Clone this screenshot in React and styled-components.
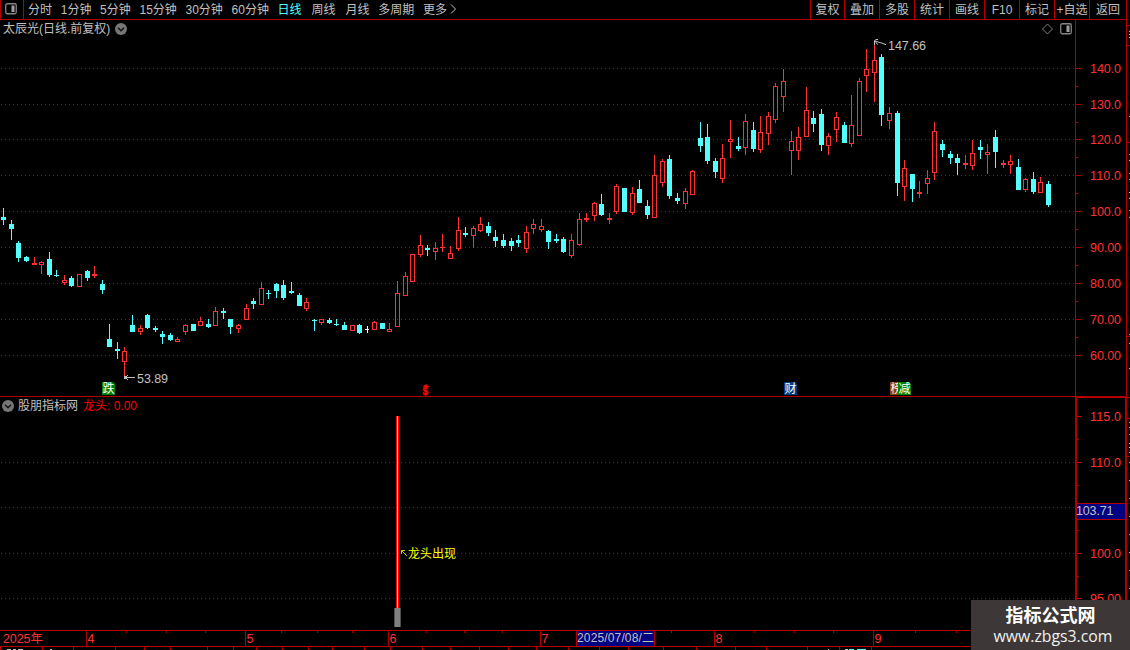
import styled, { createGlobalStyle } from "styled-components"

const RED = "#ff3232"
const CYAN = "#54ffff"
const LINE = "#b00000"
const DOT = "#a00c0c"
const GRAY = "#c0c0c0"
const FONT = `"Liberation Sans", "Noto Sans CJK SC", sans-serif`

const GlobalStyle = createGlobalStyle`
    * { box-sizing: border-box; }
    body {
        margin: 0;
        background: #000;
        overflow: hidden;
    }
    svg { display: block; }
    svg text { white-space: pre; }
`

// x, high, body top, body bottom, low, kind (u = up, d = down, e = even)
const CANDLES = [
    [3, 208, 217, 220, 225, "d"], [11, 220, 224, 229, 240, "d"], [18, 241, 243, 258, 262, "d"],
    [26, 256, 257, 261, 262, "d"], [34, 257, 263, 265, 265, "u"], [41, 261, 262, 265, 274, "u"],
    [49, 252, 259, 275, 277, "d"], [56, 270, 275, 276, 277, "d"], [64, 275, 280, 283, 285, "u"],
    [71, 276, 278, 286, 287, "d"], [79, 274, 274, 287, 287, "u"], [87, 270, 271, 278, 281, "d"],
    [94, 266, 274, 276, 278, "u"], [102, 280, 284, 290, 294, "d"], [109, 324, 339, 347, 347, "d"],
    [117, 342, 349, 351, 359, "d"], [124, 347, 351, 362, 377, "u"], [132, 315, 325, 332, 332, "d"],
    [140, 325, 328, 332, 335, "u"], [147, 314, 315, 328, 329, "d"], [155, 326, 328, 330, 332, "d"],
    [162, 331, 334, 337, 344, "d"], [170, 333, 335, 340, 341, "d"], [177, 337, 339, 342, 342, "u"],
    [185, 324, 325, 332, 335, "u"], [193, 324, 324, 331, 331, "d"], [200, 317, 321, 326, 326, "u"],
    [208, 319, 324, 327, 328, "d"], [215, 307, 311, 326, 326, "u"], [223, 308, 311, 313, 319, "d"],
    [230, 319, 319, 327, 334, "d"], [238, 324, 325, 329, 333, "u"], [246, 304, 308, 320, 320, "u"],
    [253, 298, 301, 304, 309, "d"], [261, 282, 288, 305, 305, "u"], [268, 290, 293, 294, 299, "d"],
    [276, 283, 284, 291, 298, "d"], [283, 280, 285, 298, 300, "d"], [291, 282, 291, 293, 294, "d"],
    [299, 293, 295, 306, 306, "d"], [306, 298, 302, 309, 311, "u"], [314, 319, 320, 321, 331, "d"],
    [321, 319, 319, 323, 325, "u"], [329, 318, 320, 323, 324, "d"], [336, 319, 324, 325, 326, "d"],
    [344, 322, 325, 330, 330, "d"], [352, 325, 325, 331, 331, "u"], [359, 324, 325, 333, 334, "d"],
    [367, 326, 329, 330, 333, "e"], [374, 321, 322, 330, 330, "u"], [382, 323, 323, 329, 329, "d"],
    [389, 323, 329, 332, 332, "u"], [397, 281, 293, 327, 327, "u"], [405, 272, 276, 296, 296, "u"],
    [412, 254, 254, 282, 282, "u"], [420, 235, 245, 255, 257, "u"], [427, 245, 248, 250, 256, "d"],
    [435, 242, 248, 252, 260, "u"], [442, 234, 247, 248, 252, "u"], [450, 246, 253, 259, 259, "u"],
    [458, 217, 230, 249, 251, "u"], [465, 227, 233, 235, 237, "d"], [473, 226, 228, 236, 248, "u"],
    [480, 217, 224, 231, 232, "u"], [488, 222, 226, 233, 236, "d"], [495, 230, 237, 241, 247, "d"],
    [503, 234, 240, 246, 248, "d"], [511, 238, 241, 246, 251, "d"], [518, 235, 240, 243, 247, "d"],
    [526, 226, 232, 249, 253, "u"], [533, 219, 224, 229, 234, "u"], [541, 219, 226, 230, 232, "u"],
    [548, 230, 231, 242, 249, "d"], [556, 234, 239, 241, 243, "d"], [563, 237, 239, 252, 253, "d"],
    [571, 234, 240, 256, 258, "u"], [579, 213, 219, 245, 246, "u"], [586, 213, 218, 220, 222, "u"],
    [594, 202, 203, 216, 221, "u"], [601, 194, 204, 215, 216, "d"], [609, 213, 218, 220, 224, "u"],
    [616, 184, 186, 212, 214, "u"], [624, 188, 188, 212, 212, "d"], [632, 187, 193, 213, 215, "u"],
    [639, 180, 189, 203, 203, "d"], [647, 200, 206, 215, 219, "d"], [654, 155, 175, 218, 218, "u"],
    [662, 159, 161, 183, 187, "u"], [669, 155, 159, 196, 199, "d"], [677, 193, 198, 201, 204, "d"],
    [685, 188, 191, 204, 209, "u"], [692, 170, 171, 195, 195, "u"], [700, 122, 138, 146, 152, "d"],
    [707, 124, 137, 161, 164, "d"], [715, 158, 161, 172, 178, "d"], [722, 144, 158, 179, 183, "u"],
    [730, 120, 139, 142, 158, "u"], [738, 137, 146, 149, 151, "d"], [745, 114, 121, 148, 155, "u"],
    [753, 122, 130, 149, 152, "d"], [760, 116, 132, 150, 153, "u"], [768, 112, 116, 134, 145, "u"],
    [775, 83, 86, 120, 123, "u"], [783, 69, 81, 97, 112, "u"], [791, 131, 141, 151, 175, "u"],
    [798, 127, 137, 151, 160, "u"], [806, 87, 110, 137, 137, "u"], [813, 111, 118, 124, 132, "d"],
    [821, 109, 114, 145, 151, "d"], [828, 133, 136, 146, 155, "u"], [836, 112, 117, 130, 142, "u"],
    [844, 122, 125, 143, 143, "d"], [851, 95, 125, 144, 147, "u"], [859, 78, 81, 136, 136, "u"],
    [866, 49, 69, 76, 92, "u"], [874, 43, 60, 73, 102, "u"], [881, 54, 57, 115, 126, "d"],
    [889, 107, 113, 121, 129, "u"], [897, 111, 113, 183, 196, "d"], [904, 160, 168, 187, 201, "u"],
    [912, 174, 174, 189, 202, "d"], [919, 181, 192, 194, 198, "u"], [927, 170, 178, 184, 194, "u"],
    [934, 122, 131, 173, 180, "u"], [942, 140, 144, 150, 157, "d"], [950, 151, 154, 158, 164, "d"],
    [957, 154, 158, 163, 175, "d"], [965, 155, 163, 165, 169, "u"], [972, 140, 153, 166, 170, "u"],
    [980, 140, 147, 150, 159, "d"], [987, 144, 152, 155, 174, "u"], [995, 130, 137, 152, 168, "d"],
    [1003, 160, 163, 165, 168, "u"], [1010, 155, 161, 165, 174, "u"], [1018, 159, 167, 190, 190, "d"],
    [1025, 178, 179, 190, 192, "u"], [1033, 172, 179, 192, 194, "d"], [1040, 177, 182, 193, 193, "u"],
    [1048, 181, 184, 205, 207, "d"],
]

const PRICE_TICKS = [
    [68, "140.0"], [104, "130.0"], [139, "120.0"], [175, "110.0"], [211, "100.0"],
    [247, "90.00"], [283, "80.00"], [319, "70.00"], [355, "60.00"],
]
const PRICE_HALF_TICKS = [86, 122, 157, 193, 229, 265, 301, 337]

const SIGNAL_TICKS = [[416, "115.0"], [462, "110.0"], [553, "100.0"], [598, "95.00"]]
const SIGNAL_HALF_TICKS = [439, 485, 530, 576]
const SIGNAL_GRID = [462, 507, 553, 598]

const PERIODS = ["分时", "1分钟", "5分钟", "15分钟", "30分钟", "60分钟", "日线", "周线", "月线", "多周期", "更多"]
const ACTIONS = ["复权", "叠加", "多股", "统计", "画线", "F10", "标记", "+自选", "返回"]

const MONTHS = [[86, "4"], [245, "5"], [388, "6"], [540, "7"], [714, "8"], [873, "9"]]
const WEEKS = [126, 166, 205, 281, 317, 352, 426, 464, 502, 671, 754, 794, 833, 915, 956]
const FOOT_MARKS = [
    0, 42, 73, 115, 144, 170, 207, 233, 256, 282, 308, 332, 364, 390, 422, 450, 479, 508,
    536, 568, 599, 628, 663, 696, 735, 766, 807, 839, 871,
]

const Screen = styled.div`
    position: relative;
    display: grid;
    grid-template-columns: 1126px 4px;
    width: 1130px;
    height: 650px;
    overflow: hidden;
    background: #000;
    color: ${GRAY};
    font: 12px/18px ${FONT};
`

const Main = styled.main`
    display: grid;
    grid-template-rows: 20px 377px 233px 20px;
`

const Toolbar = styled.header`
    display: flex;
    height: 20px;
    border-bottom: 1px solid ${LINE};
    line-height: 20px;
`

const ToggleCell = styled.div`
    width: 24px;
    padding: 3px 0 0 4px;
    border-left: 1px solid ${LINE};
    border-right: 1px solid ${LINE};
`

const Periods = styled.nav`
    display: flex;
    flex: 1;
    gap: 8.7px;
    padding-left: 4px;
    white-space: nowrap;
`

const Period = styled.span`
    margin-left: ${({ $spaced }) => ($spaced ? 1.3 : 0)}px;
    color: ${({ $active }) => ($active ? CYAN : GRAY)};
`

const MoreIcon = styled.svg`
    width: 8px;
    height: 18px;
    margin-left: -6px;
    fill: none;
    stroke: ${GRAY};
`

const Actions = styled.nav`
    display: grid;
    grid-template-columns: 34px repeat(7, 35px) 37px;
`

const Action = styled.span`
    border-left: 1px solid ${LINE};
    text-align: center;
    white-space: nowrap;
`

const Panel = styled.section`
    display: grid;
    grid-template-columns: 1075px 51px;
`

const PricePanel = styled(Panel)`
    border-bottom: 1px solid ${LINE};
`

const PanelHead = styled.div`
    display: flex;
    align-items: center;
    height: 18px;
    padding: 0 3px 0 2px;
    line-height: 20px;
`

const PanelName = styled.span`
    margin: 0 5px 0 ${({ $indent }) => $indent}px;
`

const PanelTools = styled.div`
    display: flex;
    gap: 7px;
    margin-left: auto;
`

const Reading = styled.span`
    color: #f00;
    line-height: 18px;
`

const Watermark = styled.div`
    position: absolute;
    right: 0;
    bottom: 0;
    display: flex;
    flex-direction: column;
    align-items: center;
    width: 159px;
    height: 50px;
    padding-top: 3px;
    background: #3d3837;
    color: #fff;
`

const WatermarkName = styled.strong`
    font: 700 18px/23px "Noto Sans CJK SC", sans-serif;
`

const WatermarkUrl = styled.span`
    padding-left: 5px;
    color: #f0f0f0;
    font: 15.8px/20px "Open Sans", sans-serif;
`

function SidebarIcon() {
    return (
        <svg width="12" height="12" fill="none">
            <rect x="0.75" y="0.75" width="10.5" height="10" rx="1.5" stroke="#858585" strokeWidth="1.3" />
            <rect x="6.5" y="2.5" width="3" height="6.5" fill="#a0a0a0" />
        </svg>
    )
}

function DropdownIcon() {
    return (
        <svg width="12" height="12" fill="none">
            <circle cx="6" cy="6" r="6" fill="#777" />
            <path d="M3 4.7l3 3 3-3" stroke="#111" strokeWidth="1.4" />
        </svg>
    )
}

function Grid({ rows }) {
    return rows.map((y) => (
        <line key={y} x1="1" x2="1075" y1={y + 0.5} y2={y + 0.5} stroke={DOT} strokeDasharray="1 3" shapeRendering="crispEdges" />
    ))
}

function Candle({ data }) {
    const [x, high, top, bottom, low, kind] = data
    const color = { u: RED, d: CYAN, e: "#fff" }[kind]
    const hollow = kind === "u" && bottom - top > 2

    return (
        <g fill={color} shapeRendering="crispEdges">
            <rect x={x} y={high} width="1" height={top - high} />
            <rect x={x} y={bottom} width="1" height={low - bottom} />
            {hollow
                ? <path d={`M${x - 2} ${top}h5v${bottom - top}h-5zm1 1v${bottom - top - 2}h3v-${bottom - top - 2}z`} fillRule="evenodd" />
                : <rect x={x - 2} y={top} width={kind === "e" ? 4 : 5} height={bottom - top} />}
        </g>
    )
}

function Badge({ x, width = 13, color, label }) {
    return (
        <svg x={x} y="382" width={width} height="13">
            <path d="M0 0h11l2 2v11H0z" fill={color} />
            <text x="0.5" y="10.8" fill="#fff" fontSize="12">{label}</text>
        </svg>
    )
}

function PriceChart() {
    return (
        <svg width="1075" height="358" viewBox="0 38 1075 358" fontFamily={FONT}>
            <Grid rows={PRICE_TICKS.map(([y]) => y)} />
            {CANDLES.map((candle) => <Candle key={candle[0]} data={candle} />)}

            <g stroke={GRAY} fill="none">
                <path d="M878 39.5H875.5M874.5 45V40.5L878 42L881 42.8L886 44.7M875 41L877.5 44.5" />
                <path d="M125 377.5H135M128 375L125.5 377.5L128 380" />
                <path d="M124 377.5h2" strokeWidth="3" />
            </g>
            <g fill={GRAY} fontSize="12.5">
                <text x="888" y="50" textLength="38">147.66</text>
                <text x="137" y="383" textLength="31">53.89</text>
            </g>

            <Badge x={102} color="#008000" label="跌" />
            <Badge x={784} color="#003c80" label="财" />
            <Badge x={890} width={8} color="#904000" label="榜" />
            <Badge x={898} color="#008000" label="减" />
            <path d="M422.5 387L426 384L429.5 387z" fill="#f00" />
            <text x="422.6" y="394.5" fill="#f00" stroke="#f00" strokeWidth="0.4" fontSize="10" fontWeight="700" textLength="6.5">$</text>
        </svg>
    )
}

function SignalChart() {
    return (
        <svg width="1075" height="215" viewBox="0 415 1075 215" fontFamily={FONT}>
            <Grid rows={SIGNAL_GRID} />
            <g shapeRendering="crispEdges">
                <rect x="396" y="416" width="3" height="192" fill="#f00" />
                <rect x="397" y="416" width="1" height="192" fill="#ffff60" />
                <rect x="394" y="608" width="7" height="19" fill="#505050" />
                <rect x="395" y="608" width="5" height="19" fill="#808080" />
            </g>
            <path d="M401.5 554V550.5H405M401.5 550.5L407 556" stroke="#c8c800" fill="none" />
            <text x="408" y="557.5" fill="#ff0" fontSize="12">龙头出现</text>
        </svg>
    )
}

function AxisTicks({ x, ticks, halfTicks }) {
    return (
        <g>
            <g fill={LINE} shapeRendering="crispEdges">
                {ticks.map(([y]) => <rect key={y} x={x} y={y} width="5" height="1" />)}
                {halfTicks.map((y) => <rect key={y} x={x} y={y} width="2" height="1" />)}
            </g>
            <g fill={RED} fontSize="12.5">
                {ticks.map(([y, label]) => <text key={y} x="1090" y={y + 5} textLength="31">{label}</text>)}
            </g>
        </g>
    )
}

function PriceAxis() {
    return (
        <svg width="51" height="376" viewBox="1075 20 51 376" fontFamily={FONT}>
            <rect x="1075" y="20" width="1" height="376" fill={LINE} />
            <AxisTicks x={1076} ticks={PRICE_TICKS} halfTicks={PRICE_HALF_TICKS} />
        </svg>
    )
}

function SignalAxis() {
    return (
        <svg width="51" height="233" viewBox="1075 397 51 233" fontFamily={FONT}>
            <path d="M1126 397H1075V630H1077V398H1125V630H1126z" fill={LINE} />
            <AxisTicks x={1077} ticks={SIGNAL_TICKS} halfTicks={SIGNAL_HALF_TICKS} />
            <rect x="1077" y="503" width="48" height="17" fill={LINE} />
            <rect x="1077" y="504" width="48" height="15" fill="#000080" />
            <text x="1076" y="515" fill={GRAY} fontSize="12.5" textLength="37.5">103.71</text>
        </svg>
    )
}

function TimeAxis() {
    return (
        <svg width="1126" height="20" viewBox="0 630 1126 20" fontFamily={FONT}>
            <g fill={LINE} shapeRendering="crispEdges">
                <rect x="0" y="630" width="1126" height="1" />
                <rect x="0" y="646" width="1126" height="1" />
                {MONTHS.map(([x]) => <rect key={x} x={x} y="630" width="1" height="17" />)}
                {WEEKS.map((x) => <rect key={x} x={x} y="631" width="1" height="2" />)}
                {FOOT_MARKS.map((x) => <rect key={x} x={x} y="647" width="1" height="3" />)}
                <rect x="576" y="630" width="79" height="17" />
                <rect x="577" y="631" width="77" height="15" fill="#000080" />
            </g>
            <g fill={RED} fontSize="12.5">
                <text x="3" y="643" textLength="40">2025年</text>
                {MONTHS.map(([x, label]) => <text key={x} x={x + 1.5} y="643">{label}</text>)}
            </g>
            <text x="577" y="642" fill={GRAY} fontSize="12" textLength="77">2025/07/08/二</text>
            <path d="M7 649.5h4M13 649.5h3M18 649.5h5M50 649.5h2M828 649.5h1M845 649.5h3" stroke={GRAY} />
            <path d="M849 649.5h5M857 649.5h9" stroke={CYAN} />
        </svg>
    )
}

function SideEdge() {
    return (
        <svg width="4" height="650" viewBox="1126 0 4 650">
            <g fill={LINE}>
                <rect x="1126" y="0" width="1" height="650" />
                {[25, 45, 142, 336, 397, 418, 456].map((y) => <rect key={y} x="1127" y={y} width="3" height="1" />)}
            </g>
            <g fill={GRAY}>
                {[31, 34, 37, 116, 154, 160, 173, 179, 192, 198, 210, 217, 334, 343, 368, 422, 427, 434, 443, 447, 452, 462, 480, 498, 516, 534, 552, 570, 588].map((y) => (
                    <rect key={y} x="1129" y={y} width="1" height="1" />
                ))}
            </g>
        </svg>
    )
}

export default function App() {
    return (
        <Screen>
            <GlobalStyle />
            <Main>
                <Toolbar>
                    <ToggleCell><SidebarIcon /></ToggleCell>
                    <Periods>
                        {PERIODS.map((name) => (
                            <Period key={name} $active={name === "日线"} $spaced={name === "周线" || name === "月线"}>
                                {name}
                            </Period>
                        ))}
                        <MoreIcon>
                            <path d="M1 4.5l4.5 4.5L1 13.5" />
                        </MoreIcon>
                    </Periods>
                    <Actions>
                        {ACTIONS.map((name) => <Action key={name}>{name}</Action>)}
                    </Actions>
                </Toolbar>

                <PricePanel>
                    <div>
                        <PanelHead>
                            <PanelName $indent={1}>太辰光(日线.前复权)</PanelName>
                            <DropdownIcon />
                            <PanelTools>
                                <svg width="11" height="12" fill="none">
                                    <path d="M5.5 1L10.5 6L5.5 11L0.5 6z" stroke="#808080" />
                                </svg>
                                <SidebarIcon />
                            </PanelTools>
                        </PanelHead>
                        <PriceChart />
                    </div>
                    <PriceAxis />
                </PricePanel>

                <Panel>
                    <div>
                        <PanelHead>
                            <DropdownIcon />
                            <PanelName $indent={4}>股朋指标网</PanelName>
                            <Reading>龙头: 0.00</Reading>
                        </PanelHead>
                        <SignalChart />
                    </div>
                    <SignalAxis />
                </Panel>

                <TimeAxis />
            </Main>
            <SideEdge />

            <Watermark>
                <WatermarkName>指标公式网</WatermarkName>
                <WatermarkUrl>www.zbgs3.com</WatermarkUrl>
            </Watermark>
        </Screen>
    )
}
